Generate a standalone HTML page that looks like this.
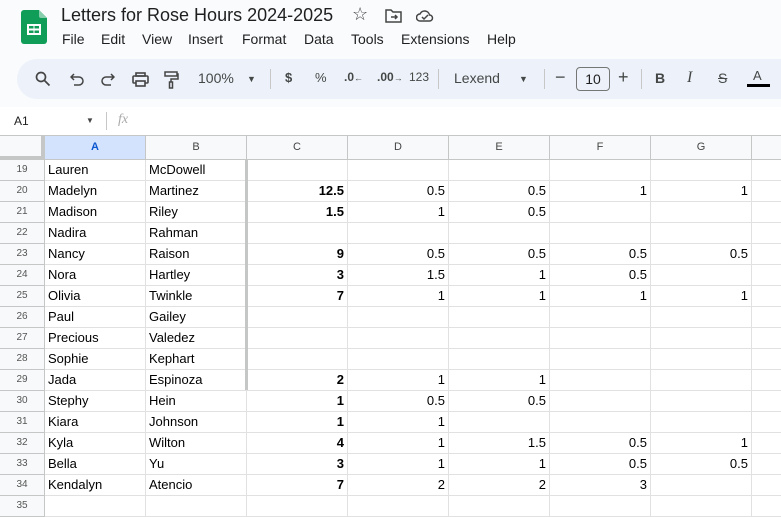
<!DOCTYPE html><html><head><meta charset="utf-8"><style>
*{margin:0;padding:0;box-sizing:border-box}
body{width:781px;height:507px;overflow:hidden;background:#f9fbfd;font-family:"Liberation Sans",Arial,sans-serif;position:relative;color:#1f1f1f}
.abs{position:absolute}
.title{left:61px;top:5px;font-size:18px;color:#1f1f1f}
.menu{top:31px;font-size:14px;color:#1f1f1f}
.tb{left:17px;top:59px;width:800px;height:40px;background:#edf2fa;border-radius:20px}
.ti{position:absolute;top:70px;font-size:14px;color:#444746}
.sep{position:absolute;top:69px;width:1px;height:20px;background:#c7c7c7}
.fb{left:0;top:107px;width:781px;height:28px;background:#fff}
.g{position:absolute;left:0;top:135px;width:800px;display:grid;grid-template-columns:45px repeat(7,101px) 48px;grid-template-rows:24px;grid-auto-rows:21px;background:#fff;border-top:1px solid #c4c7c5}
.g div{border-right:1px solid #e1e1e1;border-bottom:1px solid #e1e1e1;font-size:13px;padding:0 3px;white-space:nowrap;overflow:hidden;color:#000;line-height:20px}
.g .r{text-align:right}
.g .b{font-weight:bold}
.g .h{background:#f8f9fa;color:#444;font-size:11px;text-align:center;border-color:#c4c7c5;line-height:23px}
.g .rh{background:#f8f9fa;color:#555;font-size:10px;text-align:center;border-color:#c4c7c5}
.g .sel{background:#d3e3fd;color:#0b57d0;font-weight:bold}
</style></head><body>
<svg class="abs" style="left:21px;top:10px" width="26" height="34" viewBox="0 0 26 34"><path d="M3 0h15l8 8v23a3 3 0 0 1-3 3H3a3 3 0 0 1-3-3V3a3 3 0 0 1 3-3z" fill="#0f9d58"/><path d="M18 0l8 8h-6a2 2 0 0 1-2-2z" fill="#87ceac"/><rect x="6" y="14" width="14" height="11" fill="#fff"/><rect x="8" y="16" width="4.5" height="2.5" fill="#0f9d58"/><rect x="13.5" y="16" width="4.5" height="2.5" fill="#0f9d58"/><rect x="8" y="20.5" width="4.5" height="2.5" fill="#0f9d58"/><rect x="13.5" y="20.5" width="4.5" height="2.5" fill="#0f9d58"/></svg>
<div class="abs title">Letters for Rose Hours 2024-2025</div>
<div class="abs" style="left:352px;top:4px;font-size:18px;color:#444">☆</div>
<svg class="abs" style="left:385px;top:9px" width="17" height="14" viewBox="0 0 17 14" fill="none" stroke="#444" stroke-width="1.5"><path d="M1 1h5l2 2h8v10H1z"/><path d="M6 8h6M10 6l2 2-2 2"/></svg>
<svg class="abs" style="left:416px;top:9px" width="18" height="13" viewBox="0 0 18 13" fill="none" stroke="#444" stroke-width="1.5"><path d="M4 12a3.5 3.5 0 0 1 0-7 5 5 0 0 1 9.5 1 3 3 0 0 1 0 6z"/><path d="M6 8l2 2 4-4"/></svg>
<div class="abs menu" style="left:62px">File</div><div class="abs menu" style="left:101px">Edit</div><div class="abs menu" style="left:142px">View</div><div class="abs menu" style="left:188px">Insert</div><div class="abs menu" style="left:242px">Format</div><div class="abs menu" style="left:304px">Data</div><div class="abs menu" style="left:351px">Tools</div><div class="abs menu" style="left:401px">Extensions</div><div class="abs menu" style="left:487px">Help</div>
<div class="abs tb"></div>
<svg class="abs" style="left:35px;top:71px" width="16" height="16" viewBox="0 0 16 16" fill="none" stroke="#444" stroke-width="1.7"><circle cx="6" cy="6" r="4.5"/><path d="M9.5 9.5l5 5"/></svg>
<svg class="abs" style="left:70px;top:73px" width="14" height="13" viewBox="0 0 14 13" fill="none" stroke="#444" stroke-width="1.5"><path d="M4 1L1 4l3 3M1 4h8a4 4 0 0 1 0 8H4"/></svg>
<svg class="abs" style="left:101px;top:73px" width="14" height="13" viewBox="0 0 14 13" fill="none" stroke="#444" stroke-width="1.5"><path d="M10 1l3 3-3 3M13 4H5a4 4 0 0 0 0 8h5"/></svg>
<svg class="abs" style="left:132px;top:72px" width="17" height="15" viewBox="0 0 17 15" fill="none" stroke="#444" stroke-width="1.6"><rect x="4" y="1" width="9" height="3"/><rect x="1" y="4" width="15" height="7" rx="1"/><rect x="4" y="9" width="9" height="5" fill="#edf2fa"/></svg>
<svg class="abs" style="left:164px;top:71px" width="15" height="18" viewBox="0 0 15 18" fill="none" stroke="#444" stroke-width="1.5"><rect x="1" y="1" width="12" height="4"/><path d="M13 3h1v5H7v3"/><rect x="5.5" y="11" width="3" height="6"/></svg>
<div class="ti" style="left:198px">100%</div><div class="ti" style="left:247px;font-size:9px;top:74px">▼</div>
<div class="sep" style="left:270px"></div>
<div class="ti" style="left:285px;font-size:13px;font-weight:bold">$</div><div class="ti" style="left:315px;font-size:13px">%</div>
<div class="ti" style="left:344px;font-size:12px;font-weight:bold">.0<span style="font-size:9px">←</span></div>
<div class="ti" style="left:377px;font-size:12px;font-weight:bold">.00<span style="font-size:9px">→</span></div>
<div class="ti" style="left:409px;font-size:12px">123</div>
<div class="sep" style="left:438px"></div>
<div class="ti" style="left:454px">Lexend</div><div class="ti" style="left:519px;font-size:9px;top:74px">▼</div>
<div class="sep" style="left:544px"></div>
<div class="ti" style="left:555px;font-size:18px;top:67px">−</div>
<div class="abs" style="left:576px;top:67px;width:34px;height:24px;border:1px solid #747775;border-radius:4px;font-size:14px;text-align:center;line-height:22px;color:#1f1f1f">10</div>
<div class="ti" style="left:618px;font-size:18px;top:67px">+</div>
<div class="sep" style="left:641px"></div>
<div class="ti" style="left:655px;font-weight:bold">B</div>
<div class="ti" style="left:687px;font-style:italic;font-family:'Liberation Serif',serif;font-size:16px;top:69px">I</div>
<div class="ti" style="left:718px;text-decoration:line-through">S</div>
<div class="ti" style="left:753px;font-size:13px;top:68px">A</div><div class="abs" style="left:747px;top:84px;width:23px;height:3px;background:#000"></div>
<div class="abs fb"></div>
<div class="abs" style="left:14px;top:114px;font-size:12px">A1</div>
<div class="abs" style="left:86px;top:116px;font-size:8px;color:#444">▼</div>
<div class="abs" style="left:106px;top:112px;width:1px;height:18px;background:#c7c7c7"></div>
<div class="abs" style="left:118px;top:112px;font-size:14px;font-style:italic;color:#aaa;font-family:'Liberation Serif',serif">fx</div>
<div class="g">
<div class="h" style="border-right:4px solid #c4c7c5;border-bottom:4px solid #c4c7c5"></div><div class="h sel">A</div><div class="h">B</div><div class="h">C</div><div class="h">D</div><div class="h">E</div><div class="h">F</div><div class="h">G</div><div class="h"></div>
<div class="rh">19</div><div>Lauren</div><div>McDowell</div><div></div><div></div><div></div><div></div><div></div><div></div>
<div class="rh">20</div><div>Madelyn</div><div>Martinez</div><div class="r b">12.5</div><div class="r">0.5</div><div class="r">0.5</div><div class="r">1</div><div class="r">1</div><div></div>
<div class="rh">21</div><div>Madison</div><div>Riley</div><div class="r b">1.5</div><div class="r">1</div><div class="r">0.5</div><div></div><div></div><div></div>
<div class="rh">22</div><div>Nadira</div><div>Rahman</div><div></div><div></div><div></div><div></div><div></div><div></div>
<div class="rh">23</div><div>Nancy</div><div>Raison</div><div class="r b">9</div><div class="r">0.5</div><div class="r">0.5</div><div class="r">0.5</div><div class="r">0.5</div><div></div>
<div class="rh">24</div><div>Nora</div><div>Hartley</div><div class="r b">3</div><div class="r">1.5</div><div class="r">1</div><div class="r">0.5</div><div></div><div></div>
<div class="rh">25</div><div>Olivia</div><div>Twinkle</div><div class="r b">7</div><div class="r">1</div><div class="r">1</div><div class="r">1</div><div class="r">1</div><div></div>
<div class="rh">26</div><div>Paul</div><div>Gailey</div><div></div><div></div><div></div><div></div><div></div><div></div>
<div class="rh">27</div><div>Precious</div><div>Valedez</div><div></div><div></div><div></div><div></div><div></div><div></div>
<div class="rh">28</div><div>Sophie</div><div>Kephart</div><div></div><div></div><div></div><div></div><div></div><div></div>
<div class="rh">29</div><div>Jada</div><div>Espinoza</div><div class="r b">2</div><div class="r">1</div><div class="r">1</div><div></div><div></div><div></div>
<div class="rh">30</div><div>Stephy</div><div>Hein</div><div class="r b">1</div><div class="r">0.5</div><div class="r">0.5</div><div></div><div></div><div></div>
<div class="rh">31</div><div>Kiara</div><div>Johnson</div><div class="r b">1</div><div class="r">1</div><div></div><div></div><div></div><div></div>
<div class="rh">32</div><div>Kyla</div><div>Wilton</div><div class="r b">4</div><div class="r">1</div><div class="r">1.5</div><div class="r">0.5</div><div class="r">1</div><div></div>
<div class="rh">33</div><div>Bella</div><div>Yu</div><div class="r b">3</div><div class="r">1</div><div class="r">1</div><div class="r">0.5</div><div class="r">0.5</div><div></div>
<div class="rh">34</div><div>Kendalyn</div><div>Atencio</div><div class="r b">7</div><div class="r">2</div><div class="r">2</div><div class="r">3</div><div></div><div></div>
<div class="rh">35</div><div></div><div></div><div></div><div></div><div></div><div></div><div></div><div></div>
</div>
<div class="abs" style="left:245px;top:159px;width:3px;height:231px;background:#c4c7c5"></div>
</body></html>
